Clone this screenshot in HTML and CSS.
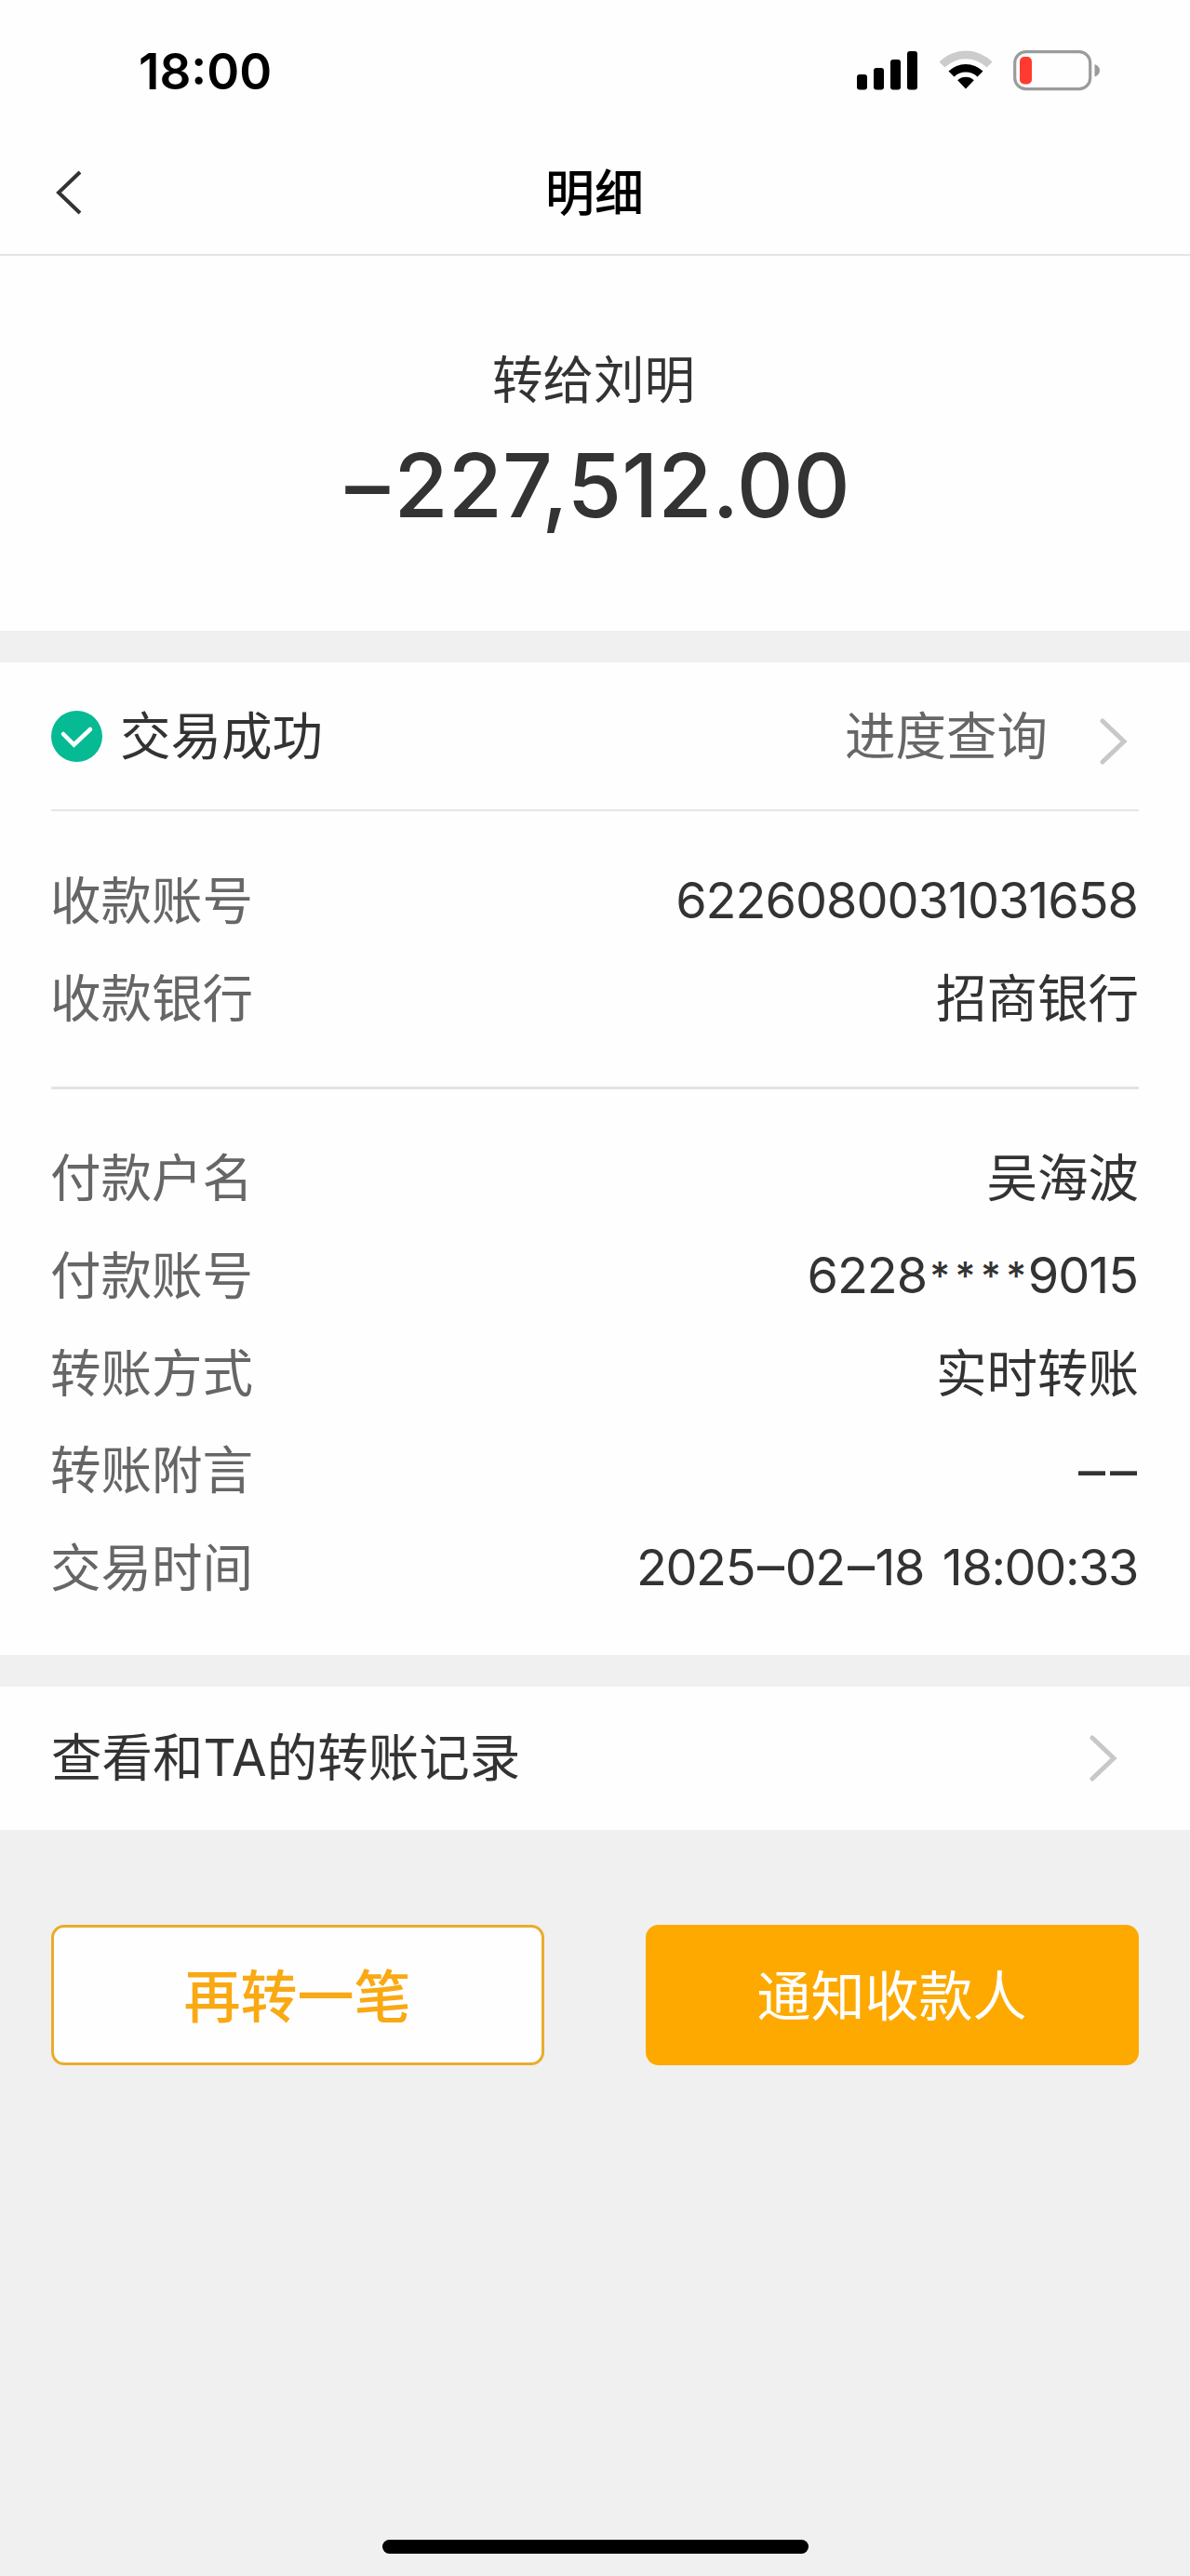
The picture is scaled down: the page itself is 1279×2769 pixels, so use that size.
FILE: index.html
```html
<!DOCTYPE html>
<html lang="zh-CN">

<head>
    <meta charset="UTF-8">
    <title>明细</title>
    <link rel="stylesheet" href="styles.css">
</head>

<body>

    <div class="page">
        <!-- Status Bar -->
        <div class="status-bar">
            <span class="status-time">18:00</span>
            <div class="status-icons">
                <svg class="icon-signal" width="66" height="42" viewBox="0 0 66 42">
                    <rect x="0" y="25" width="11" height="16.5" rx="3" />
                    <rect x="18" y="18" width="11" height="23.5" rx="3" />
                    <rect x="36" y="9" width="11" height="32.5" rx="3" />
                    <rect x="54" y="0" width="11" height="41.5" rx="3" />
                </svg>
                <svg class="icon-wifi" width="58" height="42" viewBox="0 0 58 42">
                    <path d="M0.5 12.5 A40 40 0 0 1 57.5 12.5 L51.5 18.5 A32 32 0 0 0 6.5 18.5 Z" fill="#cccccc" />
                    <path d="M10.5 22.5 A26.5 26.5 0 0 1 47.5 22.5 L41.5 28.5 A18 18 0 0 0 16.5 28.5 Z" />
                    <path d="M20.2 32.3 A13 13 0 0 1 37.8 32.3 L29 41.5 Z" />
                </svg>
                <svg class="icon-battery" width="94" height="44" viewBox="0 0 94 44">
                    <rect x="1.7" y="1.7" width="81" height="40" rx="12" fill="none" stroke="#9b9b9b" stroke-width="3.2" />
                    <rect x="7" y="7" width="13" height="29.5" rx="5" fill="#ff3b30" />
                    <path d="M87.5 15 Q93 17 93 21.7 Q93 26.5 87.5 28.5 Z" fill="#9b9b9b" />
                </svg>
            </div>
        </div>

        <!-- Header -->
        <div class="nav-bar">
            <svg class="nav-back" width="28" height="48" viewBox="0 0 28 48">
                <path d="M26 2 L3 24 L26 46" />
            </svg>
            <h1>明细</h1>
        </div>

        <!-- Amount -->
        <div class="amount-section">
            <p class="payee">转给刘明</p>
            <p class="amount"><span class="minus">–</span>227,512.00</p>
        </div>

        <!-- Transfer Details -->
        <div class="detail-section">
            <div class="status-row">
                <svg class="icon-success" width="55" height="55" viewBox="0 0 55 55">
                    <circle cx="27.5" cy="27.5" r="27.5" fill="#06ba93" />
                    <path d="M13 25 L24.5 36.5 L42 20" fill="none" stroke="#ffffff" stroke-width="4.5" stroke-linecap="round" />
                </svg>
                <span class="status-text">交易成功</span>
                <span class="progress-link">进度查询</span>
                <svg class="chevron" width="30" height="50" viewBox="0 0 30 50">
                    <path d="M3 3 L26 25 L3 47" />
                </svg>
            </div>

            <div class="detail-group payee-group">
                <div class="detail-row"><span class="label">收款账号</span><span class="value card-no">6226080031031658</span></div>
                <div class="detail-row"><span class="label">收款银行</span><span class="value">招商银行</span></div>
            </div>

            <div class="detail-group payer-group">
                <div class="detail-row"><span class="label">付款户名</span><span class="value">吴海波</span></div>
                <div class="detail-row"><span class="label">付款账号</span><span class="value card-no">6228<span class="mask">****</span>9015</span></div>
                <div class="detail-row"><span class="label">转账方式</span><span class="value">实时转账</span></div>
                <div class="detail-row"><span class="label">转账附言</span><span class="value remark">––</span></div>
                <div class="detail-row"><span class="label">交易时间</span><span class="value time">2025<span class="dash">–</span>02<span class="dash">–</span>18 18:00:33</span></div>
            </div>
        </div>

        <!-- Transfer Records -->
        <div class="record-section">
            <span class="record-text">查看和TA的转账记录</span>
            <svg class="chevron" width="30" height="50" viewBox="0 0 30 50">
                <path d="M3 3 L26 25 L3 47" />
            </svg>
        </div>

        <!-- Actions -->
        <div class="actions">
            <button class="btn-secondary">再转一笔</button>
            <button class="btn-primary">通知收款人</button>
        </div>

        <div class="home-indicator"></div>
    </div>

</body>

</html>
```

FILE: styles.css
```css
/* Base Reset */
* {
    box-sizing: border-box;
    margin: 0;
    padding: 0;
}

body {
    background-color: #f0f0f0;
    color: #333;
    font-family: Inter, "Noto Sans CJK SC", sans-serif;
    font-size: 54.5px;
    font-feature-settings: "calt" 0;
}

svg {
    display: block;
    flex-shrink: 0;
}

.page {
    display: flex;
    flex-direction: column;
    height: 2769px;
}

/* Status Bar */
.status-bar {
    display: flex;
    justify-content: space-between;
    height: 140px;
    padding: 54px 96px 0 149px;
    background-color: #fefefe;
}

.status-time {
    height: 46px;
    line-height: 46px;
    font-size: 53px;
    font-weight: 600;
    color: #000;
    font-feature-settings: "calt" 1;
}

.status-icons {
    display: flex;
}

.icon-signal {
    margin: 1px 22px 0 0;
}

.icon-wifi {
    margin-right: 22px;
}

/* Header */
.nav-bar {
    display: flex;
    align-items: center;
    height: 135px;
    padding: 0 60px;
    border-bottom: 2px solid #e4e4e4;
    background-color: #fefefe;
}

.nav-back path {
    fill: none;
    stroke: #333;
    stroke-width: 4;
}

.nav-bar h1 {
    flex: 1;
    padding: 0 29px 6px 0;
    text-align: center;
    font-size: 53px;
    font-weight: 500;
    color: #000;
}

/* Amount */
.amount-section {
    height: 403px;
    padding-top: 93px;
    text-align: center;
    background-color: #fefefe;
}

.payee {
    height: 80px;
    padding-right: 3px;
    line-height: 80px;
}

.amount {
    height: 120px;
    margin-top: 14px;
    padding-left: 6px;
    line-height: 120px;
    font-size: 94.5px;
    font-weight: 500;
}

.minus {
    margin-right: 5px;
}

/* Transfer Details */
.detail-section {
    height: 1067px;
    margin-top: 34px;
    padding: 0 55px;
    background-color: #fefefe;
}

.status-row {
    display: flex;
    align-items: center;
    height: 160px;
    border-bottom: 2px solid #e6e6e6;
}

.status-text {
    margin-left: 19px;
    padding-bottom: 8px;
}

.progress-link {
    margin-left: auto;
    padding-bottom: 8px;
    color: #666;
}

.status-row .chevron {
    margin: 11px 12px 0 56px;
}

.chevron path {
    fill: none;
    stroke: #c8c8c8;
    stroke-width: 5;
    stroke-linecap: round;
}

.payee-group {
    height: 299px;
    padding-top: 44px;
    border-bottom: 3px solid #e3e3e3;
}

.payer-group {
    padding-top: 43px;
}

.detail-row {
    display: flex;
    justify-content: space-between;
    height: 104.8px;
    line-height: 104.8px;
}

.label {
    margin-left: -1px;
    color: #666;
}

.card-no {
    padding-right: 1px;
    font-size: 54px;
    letter-spacing: -1px;
}

.mask {
    margin: 0 -4px 0 3px;
    font-size: 42px;
    font-weight: 500;
    letter-spacing: 5.5px;
    vertical-align: 3px;
    line-height: 1;
}

.remark {
    margin-right: -3px;
    padding-top: 1px;
    font-size: 58px;
    letter-spacing: 5px;
}

.time {
    padding-right: 1px;
    font-size: 54px;
    letter-spacing: -1.4px;
    word-spacing: 6px;
}

.dash {
    margin: 0 2px 0 3px;
    font-size: 58px;
    line-height: 1;
}

/* Transfer Records */
.record-section {
    display: flex;
    justify-content: space-between;
    align-items: center;
    height: 154px;
    margin-top: 34px;
    padding: 0 78px 0 55px;
    background-color: #fefefe;
}

.record-text {
    padding-bottom: 9px;
}

/* Actions */
.actions {
    display: flex;
    justify-content: space-between;
    margin-top: 102px;
    padding: 0 55px;
}

.actions button {
    width: 530px;
    height: 151px;
    padding: 0 1px 5px 0;
    border: 3px solid #fda900;
    border-radius: 14px;
    font-family: inherit;
}

.actions .btn-secondary {
    border-color: #eaac2b;
    background-color: #fefefe;
    color: #f9a913;
    font-size: 61px;
    font-weight: 500;
}

.actions .btn-primary {
    background-color: #fda900;
    color: #fff;
    font-size: 58px;
}

/* Home Indicator */
.home-indicator {
    width: 458px;
    height: 15px;
    margin: auto auto 24px;
    border-radius: 8px;
    background-color: #000;
}
```
